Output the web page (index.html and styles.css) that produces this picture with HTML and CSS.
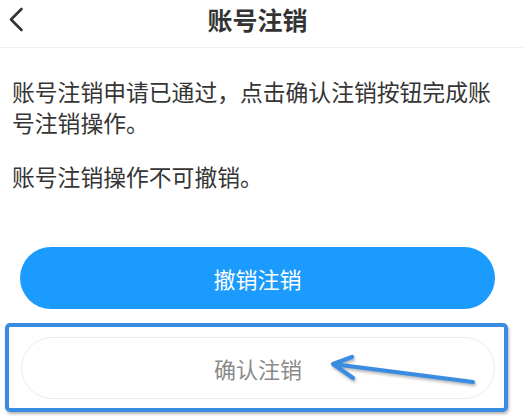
FILE: index.html
```html
<!DOCTYPE html>
<html lang="zh-CN">
<head>
<meta charset="utf-8">
<title>账号注销</title>
<link rel="stylesheet" href="styles.css">
</head>
<body>
<div class="page">
  <header class="header">
    <div class="back">
      <svg width="18" height="25" viewBox="0 0 18 25"><path d="M13.5 2 L3 12.5 L13.5 23" fill="none" stroke="#333" stroke-width="2.6" stroke-linecap="round" stroke-linejoin="round"/></svg>
    </div>
    <h1 class="title">账号注销</h1>
    <div></div>
  </header>
  <main class="content">
    <p class="para">账号注销申请已通过，点击确认注销按钮完成账号注销操作。</p>
    <p class="para second">账号注销操作不可撤销。</p>
    <div class="btn btn-primary">撤销注销</div>
    <div class="highlight">
      <div class="btn btn-outline">确认注销</div>
      <svg class="arrow" width="160" height="45" viewBox="0 0 160 45"><path d="M153 33 L13 15 M32 8 L13 15 L33 29" fill="none" stroke="#3a8ce2" stroke-width="4.2" stroke-linecap="round" stroke-linejoin="round"/></svg>
    </div>
  </main>
</div>
</body>
</html>
```

FILE: styles.css
```css
html, body {
  margin: 0;
  padding: 0;
  background: #ffffff;
}
body {
  font-family: "Noto Sans CJK SC", "Noto Sans", sans-serif;
  color: #333333;
}
.page {
  width: 523px;
  height: 419px;
  overflow: hidden;
}
.header {
  display: grid;
  grid-template-columns: 48px 1fr 56px;
  align-items: start;
  height: 48px;
  border-bottom: 1px solid #f1f1f1;
  box-sizing: border-box;
}
.back {
  padding: 7px 0 0 8px;
  line-height: 0;
}
.title {
  margin: 0;
  text-align: center;
  font-size: 25px;
  font-weight: 700;
  line-height: 38px;
  color: #333333;
}
.content {
  padding: 0;
}
.para {
  margin: 28px 12px 0 12px;
  font-size: 22.8px;
  line-height: 31px;
  color: #353535;
}
.para.second {
  margin-top: 23px;
}
.btn {
  height: 62px;
  border-radius: 31px;
  box-sizing: border-box;
  display: flex;
  align-items: center;
  justify-content: center;
  font-size: 22px;
}
.btn-primary {
  margin: 55px 28px 0 20px;
  background: #1a9bfd;
  color: #ffffff;
}
.highlight {
  position: relative;
  margin: 14px 15px 0 5px;
  border: 4px solid #3a8ce2;
  border-radius: 5px;
  padding: 10px 9px 9px 12px;
  box-shadow: 1px 2px 3px rgba(0, 0, 0, 0.3);
}
.btn-outline {
  border: 1px solid #ebebeb;
  color: #8a8a8a;
  background: #ffffff;
}
.arrow {
  position: absolute;
  left: 311px;
  top: 22px;
  filter: drop-shadow(1px 2px 1.5px rgba(0, 0, 0, 0.3));
}
```
